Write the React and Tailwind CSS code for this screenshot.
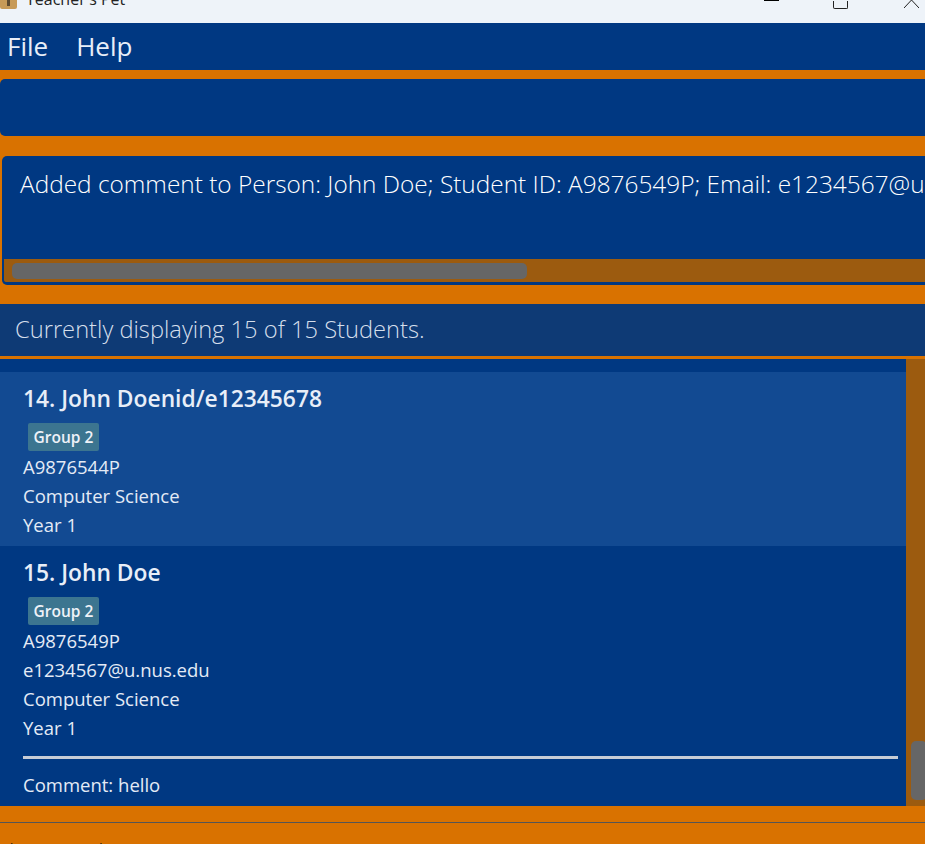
import React from "react";

const font = "font-['Open_Sans','Noto_Sans',sans-serif]";

function Tag() {
  return (
    <div className="mt-[8px] flex h-[29px] items-start pl-[5px]">
      <span className="flex h-[28px] w-[71px] items-center justify-center rounded-[2px] bg-[#3c7590] pt-[1px] text-[15.5px] font-semibold text-[#eef2f8]">
        Group 2
      </span>
    </div>
  );
}

function Line({ children }) {
  return <div className="h-[29px] text-[18.5px] leading-[29px] text-[#e4ebf6]">{children}</div>;
}

function StudentCard({ title, lines, comment, light }) {
  return (
    <div className={`flex flex-col px-[23px] pt-[10px] ${light ? "bg-[#124a92]" : "bg-[#003882]"} ${comment ? "pb-[5px]" : "pb-[7px]"}`}>
      <div className="h-[33px] text-[22.8px] font-semibold leading-[33px] text-[#e8eef8]">{title}</div>
      <Tag />
      {lines.map((line) => (
        <Line key={line}>{line}</Line>
      ))}
      {comment && (
        <>
          <div className="mr-[-15px] mt-[14px] h-[3px] bg-[#c6ccd6]" />
          <div className="mt-[11px]">
            <Line>{comment}</Line>
          </div>
        </>
      )}
    </div>
  );
}

export default function App() {
  return (
    <div className={`${font} flex h-[844px] w-[925px] flex-col overflow-hidden bg-[#d97200]`}>
      {/* Window title bar, cut off by the top of the screenshot */}
      <div className="flex h-[23px] flex-none flex-col bg-[#eef3f9]">
        <div className="flex h-[9px] items-end text-[#222]">
          <div className="h-[9px] w-[17px] flex-none rounded-b-[2px] bg-[#c79a58]">
            <div className="mx-auto h-[6px] w-[3px] bg-[#5d4a30]" />
          </div>
          <span className="ml-[9px] whitespace-nowrap text-[16px] leading-[20px]">Teacher's Pet</span>
          <div className="ml-[639px] h-px w-[15px] self-start bg-black" />
          <div className="ml-[54px] h-[8px] w-[15px] rounded-b-[2px] border-x border-b border-[#222]" />
          <svg className="ml-[56px] flex-none self-start" width="15" height="8" viewBox="0 0 15 8" fill="none" stroke="#222" strokeWidth="1">
            <path d="M0 8 L7.5 0 L15 8" />
          </svg>
        </div>
      </div>

      {/* Menu */}
      <div className="flex h-[47px] flex-none items-center gap-[28px] bg-[#003882] pl-[7px] text-[26px] text-[#e8eef8]">
        <span>File</span>
        <span>Help</span>
      </div>

      {/* Command box */}
      <div className="mt-[9px] h-[57px] flex-none rounded-l-[5px] bg-[#003882]" />

      {/* Result display */}
      <div className="ml-[2px] mt-[20px] flex h-[129px] flex-none flex-col overflow-hidden rounded-l-[5px] border-y-[3px] border-l-2 border-y-[#003882] border-l-[#003882] bg-[#003882]">
        <div className="h-[100px] flex-none whitespace-nowrap pl-[16px] pt-[6px] text-[24.4px] font-light leading-[38px] text-white">
          Added comment to Person: John Doe; Student ID: A9876549P; Email: e1234567@u.nus.edu
        </div>
        <div className="flex h-[23px] flex-none items-center bg-[#9c5b0f] pl-[8px]">
          <div className="h-[16px] w-[515px] rounded-[5px] bg-[#666666]" />
        </div>
      </div>

      {/* Status */}
      <div className="mt-[19px] flex h-[52px] flex-none items-center bg-[#0e3a75] pl-[15px] text-[23.7px] font-light text-[#d5dfec]">
        Currently displaying 15 of 15 Students.
      </div>

      {/* Student list and its scroll bar */}
      <div className="mt-[3px] flex h-[447px] flex-none">
        <div className="flex w-[906px] flex-col bg-[#003882] pt-[13px]">
          <StudentCard
            light
            title="14. John Doenid/e12345678"
            lines={["A9876544P", "Computer Science", "Year 1"]}
          />
          <StudentCard
            title="15. John Doe"
            lines={["A9876549P", "e1234567@u.nus.edu", "Computer Science", "Year 1"]}
            comment="Comment: hello"
          />
        </div>
        <div className="flex w-[19px] flex-col justify-end overflow-hidden bg-[#9c5b0f] pb-[6px] pl-[5px]">
          <div className="h-[59px] w-[16px] flex-none rounded-[5px] bg-[#666666]" />
        </div>
      </div>

      {/* Status bar */}
      <div className="mt-[16px] h-px flex-none bg-[#555555]" />
      <div className="flex-none whitespace-nowrap pt-[13px] text-[24px] font-light leading-[32px] text-[#2a1c08]">
        data\students.json
      </div>
    </div>
  );
}
